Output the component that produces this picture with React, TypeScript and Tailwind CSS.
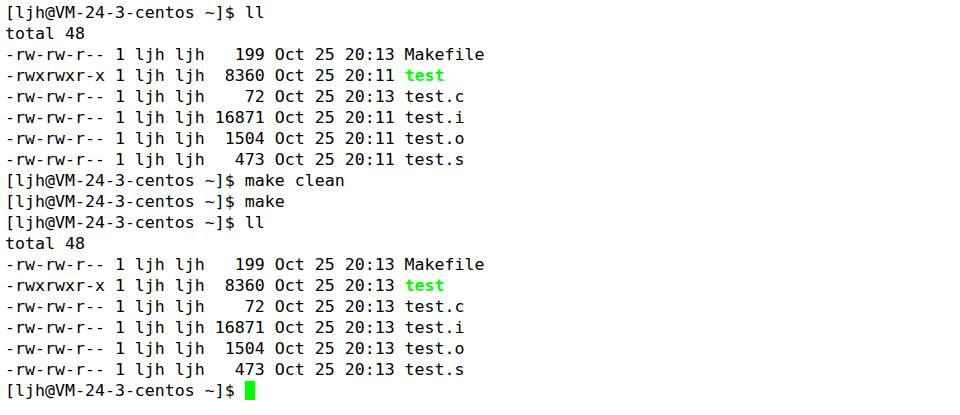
import React from "react";

const G = ({ children }: { children: React.ReactNode }) => (
  <span className="font-bold text-[#00ff00]">{children}</span>
);

const listing = (t1: string, t2: string) => [
  <>-rw-rw-r-- 1 ljh ljh   199 Oct 25 20:13 Makefile</>,
  <>-rwxrwxr-x 1 ljh ljh  8360 Oct 25 {t1} <G>test</G></>,
  <>-rw-rw-r-- 1 ljh ljh    72 Oct 25 20:13 test.c</>,
  <>-rw-rw-r-- 1 ljh ljh 16871 Oct 25 {t2} test.i</>,
  <>-rw-rw-r-- 1 ljh ljh  1504 Oct 25 {t2} test.o</>,
  <>-rw-rw-r-- 1 ljh ljh   473 Oct 25 {t2} test.s</>,
];

export default function App() {
  const P = "[ljh@VM-24-3-centos ~]$ ";
  const lines: React.ReactNode[] = [
    <>{P}ll</>,
    <>total 48</>,
    ...listing("20:11", "20:11"),
    <>{P}make clean</>,
    <>{P}make</>,
    <>{P}ll</>,
    <>total 48</>,
    ...listing("20:13", "20:13"),
    <>
      {P}
      <span className="inline-block w-[10px] h-[19px] bg-[#00ff00] align-[-4px]" />
    </>,
  ];
  return (
    <div className="w-[960px] h-[415px] bg-white overflow-hidden">
      <div
        className="pl-[5px] pt-[2px] text-black text-[16.6px] leading-[21px] whitespace-pre"
        style={{ fontFamily: '"DejaVu Sans Mono", monospace' }}
      >
        {lines.map((l, i) => (
          <div key={i} className="h-[21px]">
            {l}
          </div>
        ))}
      </div>
    </div>
  );
}
